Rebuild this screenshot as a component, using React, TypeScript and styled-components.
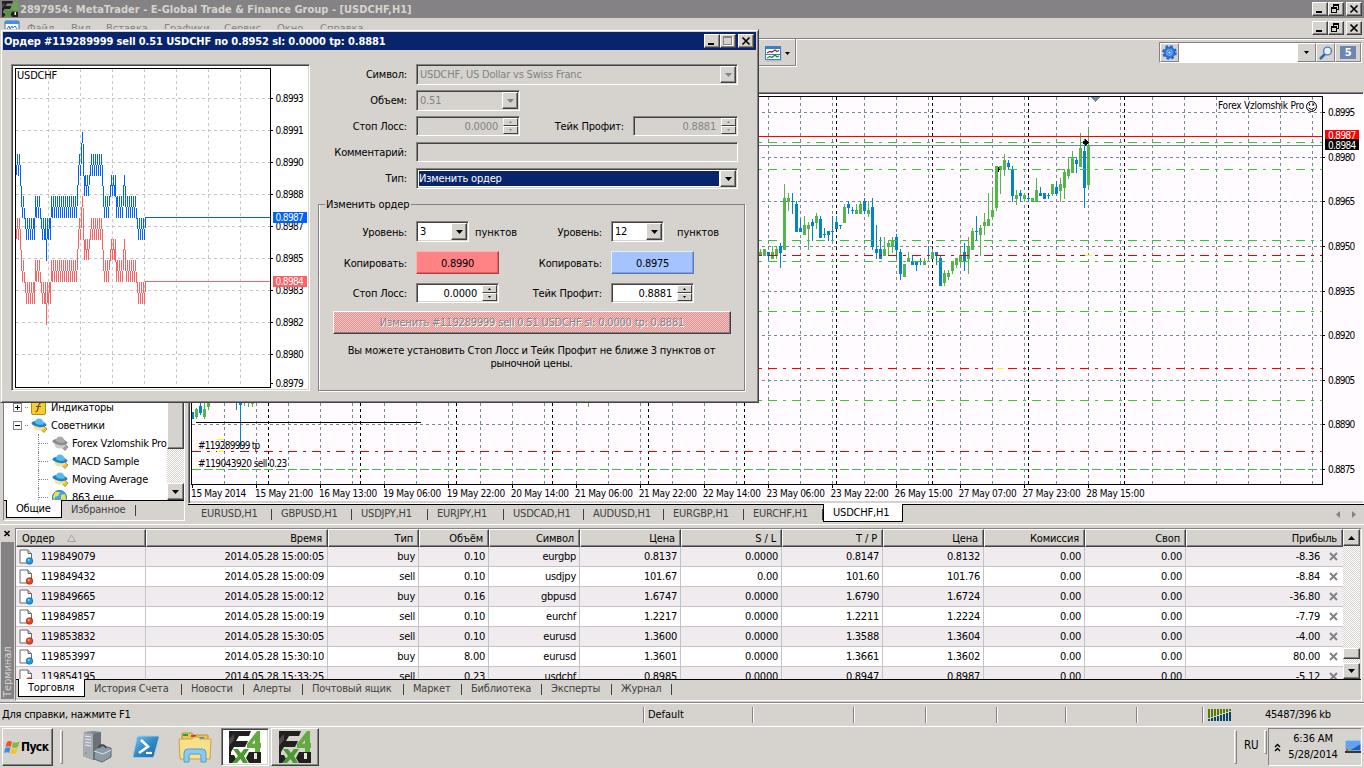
import React from "react";
import styled, { createGlobalStyle, css } from "styled-components";

const FACE = "#d6d3ce";
const SHADOW = "#848284";
const DARK = "#424142";
const NAVY = "#08246b";
const FONT = `"DejaVu Sans Condensed", "DejaVu Sans", sans-serif`;

const GlobalStyle = createGlobalStyle`
  * {
    box-sizing: border-box;
  }
  body {
    margin: 0;
    background: ${FACE};
    overflow: hidden;
  }
`;

const raised = css`
  background-color: ${FACE};
  border: 1px solid;
  border-color: #fff ${DARK} ${DARK} #fff;
  box-shadow: inset -1px -1px 0 ${SHADOW};
`;

const sunken = css`
  border: 1px solid;
  border-color: ${SHADOW} #fff #fff ${SHADOW};
  box-shadow: inset 1px 1px 0 ${DARK}, inset -1px -1px 0 ${FACE};
`;

const dither = css`
  background: repeating-conic-gradient(#fff 0 25%, ${FACE} 0 50%) 0 0 / 2px 2px;
`;

/* ---------- data ---------- */

// [up, high, top, bottom, low], one candle every 4px, three units to a pixel
type Candle = [0 | 1, number, number, number, number];

const candles: Candle[] = [
  [1, 357, 366, 378, 378],
  [1, 357, 357, 378, 378],
  [0, 366, 366, 378, 395],
  [1, 348, 366, 387, 387],
  [1, 348, 357, 378, 387],
  [0, 339, 348, 369, 414],
  [1, 162, 204, 360, 360],
  [1, 189, 204, 216, 243],
  [0, 189, 213, 216, 252],
  [0, 213, 222, 306, 306],
  [0, 267, 294, 306, 306],
  [1, 258, 285, 315, 315],
  [1, 276, 285, 297, 360],
  [0, 267, 276, 288, 333],
  [1, 249, 258, 279, 297],
  [0, 258, 267, 324, 324],
  [0, 294, 312, 315, 324],
  [0, 303, 303, 315, 333],
  [0, 258, 303, 306, 333],
  [0, 258, 276, 297, 297],
  [0, 285, 285, 288, 297],
  [1, 222, 231, 279, 279],
  [0, 213, 222, 234, 252],
  [0, 231, 240, 243, 252],
  [1, 222, 240, 252, 252],
  [1, 213, 222, 252, 252],
  [0, 204, 213, 243, 252],
  [1, 213, 240, 252, 261],
  [0, 204, 231, 351, 360],
  [0, 285, 357, 369, 387],
  [0, 321, 357, 387, 387],
  [1, 321, 357, 378, 378],
  [1, 333, 339, 351, 378],
  [1, 321, 330, 351, 369],
  [0, 312, 321, 360, 387],
  [0, 357, 366, 432, 450],
  [1, 402, 402, 441, 441],
  [1, 366, 384, 396, 396],
  [0, 375, 393, 405, 405],
  [0, 393, 393, 405, 423],
  [0, 384, 393, 396, 405],
  [1, 384, 393, 405, 405],
  [0, 348, 375, 378, 387],
  [1, 357, 366, 387, 387],
  [0, 366, 366, 378, 405],
  [0, 375, 384, 468, 468],
  [1, 420, 429, 459, 468],
  [1, 420, 429, 441, 450],
  [1, 393, 393, 423, 432],
  [1, 384, 384, 405, 414],
  [1, 357, 375, 396, 405],
  [0, 339, 366, 396, 423],
  [1, 321, 348, 387, 432],
  [1, 294, 303, 360, 360],
  [0, 258, 303, 306, 333],
  [1, 285, 294, 315, 378],
  [1, 249, 276, 288, 315],
  [1, 189, 267, 288, 288],
  [1, 171, 240, 261, 270],
  [1, 108, 108, 234, 243],
  [1, 108, 108, 120, 192],
  [1, 72, 90, 120, 138],
  [0, 90, 99, 111, 120],
  [0, 108, 117, 198, 216],
  [1, 180, 195, 207, 225],
  [0, 180, 189, 198, 216],
  [1, 189, 195, 207, 216],
  [0, 195, 204, 207, 216],
  [1, 204, 204, 216, 216],
  [1, 144, 180, 216, 216],
  [0, 171, 189, 198, 198],
  [0, 189, 189, 207, 207],
  [0, 189, 195, 198, 207],
  [1, 162, 162, 192, 198],
  [0, 153, 171, 192, 198],
  [1, 144, 162, 183, 216],
  [1, 117, 126, 174, 207],
  [1, 81, 117, 138, 147],
  [1, 63, 81, 129, 129],
  [0, 81, 90, 102, 129],
  [1, 9, 54, 111, 111],
  [0, 27, 63, 174, 234],
  [1, 0, 45, 165, 174],
];

const earlyCandles: Candle[] = [
  [0, 66, 66, 87, 87],
  [1, 54, 57, 81, 87],
  [0, 30, 48, 69, 75],
  [1, 30, 57, 81, 87],
  [1, 30, 30, 51, 60],
];

const prices = [
  ["0.8995", 112],
  ["0.8980", 157],
  ["0.8965", 201],
  ["0.8950", 246],
  ["0.8935", 291],
  ["0.8920", 335],
  ["0.8905", 380],
  ["0.8890", 424],
  ["0.8875", 469],
] as const;

const times = [
  "15 May 2014",
  "15 May 21:00",
  "16 May 13:00",
  "19 May 06:00",
  "19 May 22:00",
  "20 May 14:00",
  "21 May 06:00",
  "21 May 22:00",
  "22 May 14:00",
  "23 May 06:00",
  "23 May 22:00",
  "26 May 15:00",
  "27 May 07:00",
  "27 May 23:00",
  "28 May 15:00",
];

const daySeparators = [268, 360, 456, 552, 648, 744, 836, 932, 1028, 1124];

const orderLines = [
  ["#31cb31", 142],
  ["#31cb31", 169],
  ["#31cb31", 240],
  ["#31cb31", 261],
  ["#31cb31", 311],
  ["#31cb31", 400],
  ["#31cb31", 469],
  ["#e70000", 255],
  ["#ff0000", 368],
  ["#e70000", 451],
] as const;

const tickPrices = [
  ["0.8993", 98],
  ["0.8991", 130],
  ["0.8990", 162],
  ["0.8988", 194],
  ["0.8987", 226],
  ["0.8985", 258],
  ["0.8983", 290],
  ["0.8982", 322],
  ["0.8980", 354],
  ["0.8979", 383],
] as const;

// price levels of the tick chart and the runs that jump between two of them
const levels = [132, 154, 175.5, 196, 218, 240, 261];
const tickRuns: [number, number, number, number][] = [
  [16, 20, 1, 2],
  [21, 21, 3, 3],
  [22, 24, 3, 4],
  [25, 34, 4, 5],
  [35, 40, 3, 4],
  [41, 44, 4, 5],
  [45, 45, 4, 4],
  [46, 46, 6, 6],
  [47, 50, 4, 5],
  [51, 77, 3, 4],
  [78, 81, 1, 2],
  [82, 82, 0, 0],
  [83, 83, 1, 1],
  [84, 89, 2, 3],
  [90, 102, 1, 2],
  [103, 109, 3, 4],
  [110, 115, 2, 3],
  [116, 123, 3, 4],
  [124, 124, 2, 2],
  [125, 136, 3, 4],
  [137, 144, 4, 5],
  [145, 145, 4, 4],
];

const tickPoints = (dy: number) =>
  tickRuns
    .flatMap(([from, to, hi, lo]) =>
      Array.from({ length: to - from + 1 }, (_, i) => {
        const x = from + i;
        return `${x + 0.5},${levels[x % 2 ? hi : lo] + dy}`;
      })
    )
    .join(" ");

const columns = [
  "Ордер",
  "Время",
  "Тип",
  "Объём",
  "Символ",
  "Цена",
  "S / L",
  "T / P",
  "Цена",
  "Комиссия",
  "Своп",
  "Прибыль",
];

const orders = [
  ["119849079", "2014.05.28 15:00:05", "buy", "0.10", "eurgbp", "0.8137", "0.0000", "0.8147", "0.8132", "0.00", "0.00", "-8.36"],
  ["119849432", "2014.05.28 15:00:09", "sell", "0.10", "usdjpy", "101.67", "0.00", "101.60", "101.76", "0.00", "0.00", "-8.84"],
  ["119849665", "2014.05.28 15:00:12", "buy", "0.16", "gbpusd", "1.6747", "0.0000", "1.6790", "1.6724", "0.00", "0.00", "-36.80"],
  ["119849857", "2014.05.28 15:00:19", "sell", "0.10", "eurchf", "1.2217", "0.0000", "1.2211", "1.2224", "0.00", "0.00", "-7.79"],
  ["119853832", "2014.05.28 15:30:05", "sell", "0.10", "eurusd", "1.3600", "0.0000", "1.3588", "1.3604", "0.00", "0.00", "-4.00"],
  ["119853997", "2014.05.28 15:30:10", "buy", "8.00", "eurusd", "1.3601", "0.0000", "1.3661", "1.3602", "0.00", "0.00", "80.00"],
  ["119854195", "2014.05.28 15:33:25", "sell", "0.23", "usdchf", "0.8985", "0.0000", "0.8947", "0.8987", "0.00", "0.00", "-5.12"],
];

/* ---------- icons ---------- */

function ForexLogo({ size }: { size: number }) {
  return (
    <svg width={size} height={size} viewBox="0 0 32 32">
      <path d="M0 0H22L20 5H10L7 10H19L16 16H5L2 21V24H5L7 28L5 32H0Z" fill="#21201f" />
      <path d="M0 8L5 3V9L0 15Z" fill="#4a494a" />
      <path d="M20 21H32V32H20L17 27Z" fill="#21201f" />
      <rect x="25" y="22" width="3" height="6" fill="#e7e7de" />
      <path d="M28 0H31V12H32V17H31V21H26V17H18V13ZM26 9L23 12.500H26Z" fill="#63aa42" fillRule="evenodd" />
      <path d="M4 18H9L12 22L15 18H20L15 25L19 32H14L11.500 28L8 32H3L9 25Z" fill="#4a9a31" />
    </svg>
  );
}

const MdiIcon = () => (
  <svg width="16" height="16" viewBox="0 0 16 16">
    <rect x="1" y="1" width="14" height="12" rx="1" fill="#fff" stroke="#3175ce" />
    <rect x="1" y="1" width="14" height="3" fill="#4a8ae7" />
    <path d="M3 9l2-3 1 3 2-3 1 2 2-2 2 3" fill="none" stroke="#3175ce" />
  </svg>
);

const MinGlyph = () => (
  <svg width="14" height="12" viewBox="0 0 14 12" shapeRendering="crispEdges">
    <rect x="3" y="8" width="6" height="2" />
  </svg>
);

const MaxGlyph = () => (
  <svg width="14" height="12" viewBox="0 0 14 12" shapeRendering="crispEdges">
    <path d="M2 1h9v9h-9zM3 3v6h7V3z" fill="#848284" fillRule="evenodd" />
    <path d="M11 2h1v9H3v-1h8z" fill="#fff" />
  </svg>
);

const RestoreGlyph = () => (
  <svg width="14" height="12" viewBox="0 0 14 12" shapeRendering="crispEdges">
    <path d="M4 1h6v6h-2V6h1V3H5v1H4z" />
    <path d="M2 4h6v6H2zM3 6v3h4V6z" fillRule="evenodd" />
  </svg>
);

const CloseGlyph = () => (
  <svg width="14" height="12" viewBox="0 0 14 12">
    <path d="M3.500 2.500l7 7M10.500 2.500l-7 7" stroke="#000" strokeWidth="1.700" />
  </svg>
);

function Caret({ up, color = "#000", size = 7 }: { up?: boolean; color?: string; size?: number }) {
  const half = (size + 1) / 2;
  return (
    <svg width={size} height={half} viewBox={`0 0 ${size} ${half}`}>
      <path d={up ? `M0 ${half}H${size}L${size / 2} 0Z` : `M0 0H${size}L${size / 2} ${half}Z`} fill={color} />
    </svg>
  );
}

const TemplateIcon = () => (
  <svg width="17" height="16" viewBox="0 0 17 16">
    <rect x="1.5" y="1.5" width="15" height="14" fill="#a5a29c" opacity=".5" />
    <rect x=".5" y=".5" width="15" height="13" fill="#fff" stroke="#3182ce" />
    <rect x="0" y="0" width="16" height="3" fill="#3182ce" />
    <path d="M1 8.5h14" stroke="#3182ce" />
    <path d="M2 7l3-1.5 2 .5 3-2 2 1.500 2-1" fill="none" stroke="#a52810" strokeWidth="1.3" />
    <path d="M2 12l3-1.500 2 1 3-2.500 2 2 2-1" fill="none" stroke="#218a31" strokeWidth="1.300" />
  </svg>
);

const GearIcon = () => (
  <svg width="15" height="15" viewBox="0 0 16 16">
    <circle cx="8" cy="8" r="5.800" fill="#3179de" stroke="#1859bd" />
    <circle cx="8" cy="8" r="6.600" fill="none" stroke="#2169ce" strokeWidth="2.400" strokeDasharray="2.900 2.280" />
    <circle cx="8" cy="8" r="3.400" fill="#73b2f7" />
    <circle cx="8" cy="8" r="1.700" fill="#dee7f7" stroke="#1859bd" />
  </svg>
);

const SearchIcon = () => (
  <svg width="14" height="14" viewBox="0 0 14 14">
    <path d="M1 13l5-5" stroke="#3165ad" strokeWidth="2.500" />
    <circle cx="8.500" cy="5" r="3.900" fill="#e7f3ff" stroke="#4a7dc6" strokeWidth="1.400" />
  </svg>
);

function ExpertIcon({ gray }: { gray?: boolean }) {
  return (
    <svg width="17" height="15" viewBox="0 0 17 15">
      <path d="M12 7.500l4 3.500-3 3.500-3.500-3.500z" fill={gray ? "#a5a2a5" : "#efc331"} stroke={gray ? "#848284" : "#ad8208"} strokeWidth=".8" />
      <ellipse cx="8" cy="8.500" rx="5.500" ry="4" fill={gray ? "#cecbce" : "#f7dfa5"} />
      <ellipse cx="8" cy="6" rx="7.600" ry="3" fill={gray ? "#8c8a8c" : "#2182bd"} transform="rotate(8 8 6)" />
      <path d="M4 5c0-6 8-6 9 1c-3 1.500-6 1-9-1z" fill={gray ? "#adaaad" : "#5abaef"} />
    </svg>
  );
}

const FunctionIcon = () => (
  <svg width="15" height="15" viewBox="0 0 15 15">
    <rect x=".5" y=".5" width="14" height="14" rx="1.500" fill="#f7cb31" stroke="#b58a10" />
    <path d="M10 3c-4-.5-1.500 9-5.500 9M5 6.500h5" stroke="#6b4900" fill="none" strokeWidth="1.200" />
  </svg>
);

const GlobeIcon = () => (
  <svg width="15" height="15" viewBox="0 0 15 15">
    <circle cx="7.500" cy="7.500" r="7" fill="#42a6e7" stroke="#2175b5" />
    <path d="M3 2l5 0-2 4-3 1-1 4-1-4zM9 5l4-1 1 5-3 4-2-4z" fill="#efdf4a" />
  </svg>
);

function OrderIcon({ buy }: { buy: boolean }) {
  return (
    <svg width="15" height="16" viewBox="0 0 15 16">
      <path d="M1 1h8l3.500 3.500V14h-11.500z" fill="#fff" stroke="#6b696b" />
      <path d="M9 1v3.500H12.500" fill="#cecbce" stroke="#6b696b" />
      <circle cx="10.500" cy="12" r="3.300" fill={buy ? "#219ade" : "#e74921"} stroke={buy ? "#0865a5" : "#9c2008"} strokeWidth=".7" />
      <circle cx="9.700" cy="11" r="1" fill="#fff" opacity=".6" />
    </svg>
  );
}

const WindowsFlag = () => (
  <svg width="16" height="15" viewBox="0 0 16 15">
    <path d="M3 2c2-1.500 3-1 5-.3L6.800 7C5 6 3.500 6 1.500 7z" fill="#f0502a" />
    <path d="M9 2c2 1 4 1 6.500-.4L14 7c-2 1.300-4 1.200-6.200.3z" fill="#7bbf3f" />
    <path d="M1.300 8c2-1 3.500-1 5.200-.2L5.200 13C3.500 12 2 12 0 13z" fill="#3c8de0" />
    <path d="M7.500 8.300c2 1 4 1 6.300-.2L12.500 13c-2 1.500-4 1.200-6.300.3z" fill="#f9c22e" />
  </svg>
);

const ServerIcon = () => (
  <svg width="30" height="32" viewBox="0 0 30 32">
    <path d="M2 1l10-1 7 1v24l-8 4-10-4z" fill="#848a94" />
    <path d="M2 1l9 2v26L1 25z" fill="#a5aab5" />
    <path d="M11 3l8-2v24l-8 4z" fill="#6b717b" />
    <path d="M3 5l6 1M3 8l6 1M3 11l6 1M3 14l6 1" stroke="#e7ebef" strokeWidth="1.200" />
    <circle cx="4" cy="22" r="1" fill="#52c331" />
    <path d="M13 18l8-3 8 2v9l-9 5-8-3z" fill="#8c9aa5" stroke="#5a6973" />
    <path d="M12 20l9 3 8-4" fill="none" stroke="#dee3e7" />
    <path d="M17 17c0-4 6-4 7 0" fill="none" stroke="#39414a" strokeWidth="1.500" />
  </svg>
);

const PowerShellIcon = () => (
  <svg width="28" height="24" viewBox="0 0 28 24">
    <defs>
      <linearGradient id="ps" x1="0" y1="0" x2="1" y2="1">
        <stop offset="0" stopColor="#7bc3ef" />
        <stop offset=".5" stopColor="#318ac6" />
        <stop offset="1" stopColor="#1865a5" />
      </linearGradient>
    </defs>
    <path d="M7 1h19q1.500 0 1 1.500L22 21q-.5 1.500-2 1.500H2q-1.500 0-1-1.500L5 2.500q.5-1.500 2-1.500z" fill="url(#ps)" stroke="#9ccbe7" />
    <path d="M9 5l7 6.500L7 18" fill="none" stroke="#fff" strokeWidth="2.600" />
    <path d="M14 18h6" stroke="#fff" strokeWidth="2.200" />
  </svg>
);

const FolderIcon = () => (
  <svg width="34" height="32" viewBox="0 0 34 32">
    <path d="M4 2h10l2 2h14v20H4z" fill="#e7c35a" stroke="#bd9231" />
    <rect x="5" y="3" width="5" height="2" fill="#21a631" />
    <rect x="13" y="4" width="5" height="2" fill="#de3921" />
    <rect x="21" y="6" width="5" height="2" fill="#3992de" />
    <path d="M1 8h13l2-2h5l1 2h11l-1 20H2z" fill="#f7df8c" stroke="#cea242" />
    <path d="M6 31v-9q0-4 4-4h14q4 0 4 4v9h-5v-6q0-2-2-2h-8q-2 0-2 2v6z" fill="#8ccbef" stroke="#529ece" />
  </svg>
);

const MonitorIcon = () => (
  <svg width="16" height="14" viewBox="0 0 16 14">
    <rect x="0" y="0" width="16" height="11" fill="#215dbd" />
    <path d="M0 0h16v4L4 11H0z" fill="#63a2ef" />
    <rect x="0" y="0" width="16" height="11" fill="none" stroke="#dee7ef" />
    <rect x="0" y="11" width="16" height="2" fill="#31393a" />
    <rect x="1" y="9" width="2" height="2" fill="#ef4921" />
    <rect x="3" y="9" width="2" height="2" fill="#7bc339" />
  </svg>
);

/* ---------- frame ---------- */

const Desktop = styled.div`
  position: relative;
  width: 1364px;
  height: 768px;
  display: flex;
  flex-direction: column;
  overflow: hidden;
  background: ${FACE};
  font: 11px/13px ${FONT};
  letter-spacing: -0.3px;
  color: #000;
  white-space: nowrap;
  cursor: default;

  svg {
    display: block;
    flex: none;
  }
`;

const AppTitle = styled.div`
  height: 18px;
  flex: none;
  display: flex;
  align-items: center;
  gap: 2px;
  padding: 0 2px;
  background: ${SHADOW};
  color: ${FACE};
`;

const BoldText = styled.b<{ $spacing: number }>`
  flex: 1;
  letter-spacing: ${({ $spacing }) => $spacing}px;
`;

const WinButtons = styled.div`
  display: flex;
  margin-left: auto;
  padding-bottom: 1px;
`;

const WinButton = styled.div<{ $close?: boolean }>`
  ${raised}
  width: 16px;
  height: 14px;
  margin-left: ${({ $close }) => ($close ? 2 : 0)}px;
`;

const MenuBar = styled.div`
  height: 20px;
  flex: none;
  display: flex;
  align-items: center;
  padding: 0 2px 0 4px;
  color: ${SHADOW};
`;

const MenuItem = styled.span<{ $width: number }>`
  width: ${({ $width }) => $width}px;
  letter-spacing: 0;
`;

const ToolbarArea = styled.div`
  height: 54px;
  flex: none;
  display: flex;
  align-items: flex-start;
  justify-content: space-between;
  border-top: 1px solid ${SHADOW};
  box-shadow: inset 0 1px 0 #fff;
`;

const ToolGroup = styled.div`
  width: 797px;
  height: 28px;
  display: flex;
  align-items: center;
  justify-content: flex-end;
  gap: 3px;
  padding: 2px 6px 0 0;
  border: solid #fff;
  border-width: 0 1px 1px 0;
  box-shadow: inset -1px -1px 0 ${SHADOW};
`;

const SearchBox = styled.div`
  display: flex;
  height: 21px;
  margin: 3px 2px 0 0;
  border: 1px solid;
  border-color: ${SHADOW} #fff #fff ${SHADOW};
`;

const SearchPart = styled.div<{ $width: number; $input?: boolean }>`
  width: ${({ $width }) => $width}px;
  display: flex;
  align-items: center;
  justify-content: center;
  background: ${({ $input }) => ($input ? "#fff" : FACE)};
  border: ${({ $input }) => ($input ? "none" : `1px solid ${SHADOW}`)};
  border-color: #fff ${SHADOW} ${SHADOW} #fff;
`;

const Bubble = styled.div`
  width: 16px;
  height: 13px;
  background: #6b86b5;
  color: #fff;
  font-weight: bold;
  text-align: center;
`;

const Workspace = styled.div`
  height: 432px;
  flex: none;
  display: flex;
`;

/* ---------- navigator ---------- */

const Navigator = styled.div`
  width: 187px;
  display: flex;
  flex-direction: column;
  justify-content: flex-end;
  padding: 0 2px 0 3px;
`;

const NavFrame = styled.div`
  height: 150px;
  margin-bottom: 3px;
  display: flex;
  flex-direction: column;
  border: 1px solid;
  border-color: ${SHADOW} #fff #fff ${SHADOW};
`;

const TreeArea = styled.div`
  flex: 1;
  min-height: 0;
  display: flex;
  background: #fff;
  overflow: hidden;
`;

const Tree = styled.div`
  width: 163px;
  margin-top: 26px;
`;

const TreeRow = styled.div<{ $level: number }>`
  height: 18px;
  display: flex;
  align-items: center;
  gap: 3px;
  padding-left: ${({ $level }) => ($level ? 34 : 9)}px;
  overflow: hidden;
  letter-spacing: -0.25px;
`;

const Expander = styled.span`
  width: 9px;
  height: 9px;
  border: 1px solid ${SHADOW};
  display: grid;
  place-items: center;
`;

const DotLink = styled.span<{ $child?: boolean }>`
  width: ${({ $child }) => ($child ? 11 : 3)}px;
  height: ${({ $child }) => ($child ? 18 : 1)}px;
  border-left: ${({ $child }) => ($child ? `1px dotted ${SHADOW}` : "none")};
  background: linear-gradient(90deg, ${SHADOW} 50%, transparent 0) 0 50% / 2px 1px repeat-x;
`;

const TreeText = styled.span<{ $left: number }>`
  padding-left: ${({ $left }) => $left}px;
`;

const ScrollBar = styled.div`
  ${dither}
  width: 17px;
  display: flex;
  flex-direction: column;
`;

const ScrollPart = styled.div<{ $height: number; $gap?: number }>`
  ${raised}
  height: ${({ $height }) => $height}px;
  margin-bottom: ${({ $gap = 0 }) => $gap}px;
  flex: none;
  display: grid;
  place-items: center;
`;

const Spring = styled.div`
  flex: 1;
`;

const TabStrip = styled.div<{ $height: number; $pad: number }>`
  height: ${({ $height }) => $height}px;
  flex: none;
  display: flex;
  align-items: flex-start;
  padding-left: ${({ $pad }) => $pad}px;
  border-top: 1px solid #000;
  color: ${DARK};
`;

const Tab = styled.div<{ $width: number; $active?: boolean }>`
  width: ${({ $width }) => $width}px;
  height: 18px;
  margin-top: -1px;
  display: flex;
  align-items: center;
  padding-left: 9px;
  letter-spacing: -0.2px;
  ${({ $active }) =>
    $active
      ? css`
          background: #fff;
          color: #000;
          border: 1px solid #000;
          border-top: none;
        `
      : css`
          background: linear-gradient(${DARK}, ${DARK}) right 5px / 1px 11px no-repeat;
        `}
`;

/* ---------- main chart ---------- */

const ChartColumn = styled.div`
  flex: 1;
  display: flex;
  flex-direction: column;
  border-left: 1px solid ${FACE};
`;

const ChartFrame = styled.div`
  height: 412px;
  flex: none;
  border: 1px solid;
  border-color: ${SHADOW} #fff #fff ${SHADOW};
  box-shadow: inset 1px 1px 0 ${DARK}, inset 0 -2px 0 ${FACE};
  padding: 1px 0 0 1px;
  background: #fffbff;
  overflow: hidden;
`;

const TabArrows = styled.div`
  margin: 6px 8px 0 auto;
  display: flex;
  gap: 12px;
`;

const chartText = { fontFamily: FONT, fontSize: 10 } as const;

function CandleShape({ x, base, data }: { x: number; base: number; data: Candle }) {
  const [up, high, top, bottom, low] = data;
  const y = (v: number) => base + Math.round(v / 3);
  return (
    <g fill={up ? "#52b64a" : "#0086c6"}>
      <rect x={x} y={y(high)} width="1" height={Math.max(1, y(low) - y(high))} />
      <rect x={x - 1} y={y(top)} width="3" height={Math.max(1, y(bottom) - y(top))} />
    </g>
  );
}

function MainChart() {
  return (
    <svg width="1172" height="408" viewBox="190 94 1172 408" shapeRendering="crispEdges">
      <g stroke="#738a9c" strokeDasharray="3 3">
        {Array.from({ length: 35 }, (_, i) => 224 + i * 32).map((x) => (
          <path key={x} d={`M${x + 0.5} 97V484`} />
        ))}
        {prices.map(([label, y]) => (
          <path key={label} d={`M192 ${y + 0.5}H1322`} />
        ))}
      </g>
      {daySeparators.map((x) => (
        <path key={x} d={`M${x + 0.5} 97V484`} stroke="#000" strokeDasharray="3 3" />
      ))}
      {candles.map((c, i) => (
        <CandleShape key={i} x={760 + i * 4} base={130} data={c} />
      ))}
      {earlyCandles.map((c, i) => (
        <CandleShape key={i} x={192 + i * 4} base={390} data={c} />
      ))}
      <g fill="#0086c6">
        <rect x="236" y="400" width="1" height="10" />
        <rect x="239" y="400" width="3" height="5" />
        <rect x="240" y="400" width="1" height="49" />
      </g>
      <g fill="#52b64a">
        <rect x="244" y="400" width="1" height="6" />
        <rect x="248" y="400" width="1" height="7" />
        <rect x="251" y="400" width="3" height="4" />
        <rect x="252" y="400" width="1" height="7" />
        <rect x="588" y="400" width="1" height="7" />
      </g>
      {orderLines.map(([color, y]) => (
        <path key={y} d={`M192 ${y + 0.5}H1322`} stroke={color} strokeDasharray="9 6 3 6" />
      ))}
      <path d="M217 439.500h7M217 451.500h7M997 368.500h7M1085 255.500h7" stroke="#ff0" />
      <path d="M192 136.500H1322" stroke="#f00" />
      <path d="M192 145.500H1322" stroke="#738a9c" />
      <path d="M196 422.500H421" stroke="#000" />
      <path d="M1083 141h2v-2h1v1h1v1h1v1h1v1h-1v1h-1v1h-1v1h-1v-2h-2z" />
      <path d="M998 167h1v2h1v1h-1v2h-1z" />
      <path d="M1090 97h10l-5 5z" fill="#738a9c" />
      <path d="M191.500 485V96.500H1322.500V484.500H191" fill="none" stroke="#000" />
      {prices.map(([label, y]) => (
        <g key={label}>
          <rect x="1322" y={y} width="3" height="1" />
          <text x="1328" y={y + 4} textLength="27" {...chartText}>
            {label}
          </text>
        </g>
      ))}
      <rect x="1325" y="130" width="34" height="10" fill="#f00" />
      <rect x="1325" y="139" width="34" height="11" />
      <text x="1328" y="139" textLength="28" fill="#fff" {...chartText}>
        0.8987
      </text>
      <text x="1328" y="148.500" textLength="28" fill="#fff" {...chartText}>
        0.8984
      </text>
      {times.map((label, i) => (
        <g key={label}>
          <rect x={192 + i * 64} y="485" width="1" height="3" />
          <text x={i ? 255 + (i - 1) * 63.95 : 191} y="497" textLength={i ? 58 : 55} {...chartText}>
            {label}
          </text>
        </g>
      ))}
      <text x="198" y="449" textLength="62" {...chartText}>
        #119289999 tp
      </text>
      <text x="198" y="467" textLength="89" {...chartText}>
        #119043920 sell 0.23
      </text>
      <text x="1218" y="109" textLength="86" {...chartText}>
        Forex Vzlomshik Pro
      </text>
      <g fill="none" stroke="#000" shapeRendering="auto">
        <circle cx="1311.500" cy="106.500" r="5" />
        <path d="M1308.500 108q3 3 6 0" />
        <path d="M1309.500 103.500v2M1313.500 103.500v2" strokeWidth="1.300" />
      </g>
    </svg>
  );
}

/* ---------- terminal ---------- */

const Terminal = styled.div`
  height: 177px;
  flex: none;
  display: flex;
  border-top: 1px solid #fff;
`;

const TerminalSide = styled.div`
  width: 15px;
  padding: 5px 1px 0;
`;

const TerminalBar = styled.div`
  width: 13px;
  height: 157px;
  margin-top: 5px;
  background: ${SHADOW};
  color: ${FACE};
  writing-mode: vertical-rl;
  transform: rotate(180deg);
  text-align: left;
  padding-top: 2px;
  letter-spacing: -0.1px;
  line-height: 13px;
`;

const TerminalFrame = styled.div`
  flex: 1;
  margin: 3px 2px 0 0;
  border: 1px solid;
  border-color: ${SHADOW} #fff #fff ${SHADOW};
`;

const TableArea = styled.div`
  height: 150px;
  display: flex;
  overflow: hidden;
`;

const Table = styled.div`
  width: 1327px;
`;

const TableRow = styled.div<{ $alt?: boolean }>`
  display: grid;
  grid-template-columns: 130px 182px 91px 70px 91px repeat(6, 101px) 157px;
  height: 20px;
  background: ${({ $alt }) => ($alt ? "#efebef" : "#fff")};
`;

const HeadCell = styled.div`
  ${raised}
  height: 18px;
  padding: 2px 5px 0 5px;
  display: flex;
  gap: 12px;
  justify-content: flex-end;
  letter-spacing: -0.15px;

  &:first-child {
    justify-content: flex-start;
  }
`;

const HeadRow = styled(TableRow)`
  height: 18px;
`;

const Cell = styled.div`
  display: flex;
  align-items: center;
  justify-content: flex-end;
  padding-right: 3px;
  letter-spacing: -0.25px;
  border: solid #c6c3c6;
  border-width: 0 1px 1px 0;

  &:first-child {
    justify-content: flex-start;
    gap: 7px;
    padding-left: 3px;
  }
  &:last-child {
    padding-right: 5px;
    gap: 9px;
    border-right: none;
  }
`;

/* ---------- status bar and taskbar ---------- */

const StatusBar = styled.div`
  height: 25px;
  margin-top: 1px;
  flex: none;
  display: flex;
  align-items: center;
  border: solid;
  border-width: 1px 0;
  border-color: ${SHADOW} transparent #fff;
  box-shadow: inset 0 1px 0 #fff;
`;

const StatusCell = styled.div<{ $width: number }>`
  width: ${({ $width }) => $width}px;
  height: 16px;
  display: flex;
  align-items: center;
  padding-left: 2px;
  border-right: 1px solid ${SHADOW};
  box-shadow: 1px 0 0 #fff;

  &:last-child {
    border: none;
    box-shadow: none;
    gap: 33px;
    padding-left: 5px;
  }
`;

const StatusText = styled.span<{ $spacing: number; $left?: number }>`
  letter-spacing: ${({ $spacing }) => $spacing}px;
  padding-left: ${({ $left = 0 }) => $left}px;
`;

const Taskbar = styled.div`
  flex: 1;
  display: flex;
  align-items: flex-start;
  padding: 1px 2px 0;
`;

const StartButton = styled.div`
  ${raised}
  width: 51px;
  height: 38px;
  display: flex;
  align-items: center;
  gap: 1px;
  padding-left: 1px;
  font-size: 12px;
  font-weight: bold;
  letter-spacing: -0.6px;
`;

const Grip = styled.div<{ $left: number; $height: number }>`
  width: 3px;
  height: ${({ $height }) => $height}px;
  margin: 2px 0 0 ${({ $left }) => $left}px;
  border: 1px solid;
  border-color: #fff ${SHADOW} ${SHADOW} #fff;
`;

const QuickLaunch = styled.div<{ $left: number }>`
  height: 38px;
  display: flex;
  align-items: center;
  margin-left: ${({ $left }) => $left}px;
`;

const TaskButton = styled.div<{ $active?: boolean }>`
  ${({ $active }) => ($active ? sunken : raised)}
  width: 48px;
  height: 38px;
  margin-right: 2px;
  display: grid;
  place-items: center;
  background-color: ${({ $active }) => ($active ? "#fff" : FACE)};
`;

const TrayText = styled.div`
  align-self: center;
  margin: 0 4px 5px 7px;
  width: 18px;
  font-size: 11.5px;
`;

const Tray = styled.div`
  width: 94px;
  height: 38px;
  margin-left: 1px;
  display: flex;
  align-items: center;
  gap: 5px;
  padding-left: 5px;
  border: 1px solid;
  border-color: ${SHADOW} #fff #fff ${SHADOW};
`;

const Clock = styled.div`
  width: 54px;
  text-align: center;
  line-height: 16px;
  letter-spacing: -0.15px;
`;

/* ---------- order dialog ---------- */

const Dialog = styled.div`
  position: absolute;
  left: 0;
  top: 29px;
  width: 759px;
  height: 374px;
  padding: 1px;
  background: ${FACE};
  border: 1px solid;
  border-color: ${FACE} ${DARK} ${DARK} ${FACE};
  box-shadow: inset 1px 1px 0 #fff, inset -1px -1px 0 ${SHADOW};
`;

const DialogTitle = styled.div`
  height: 18px;
  margin: 1px 1px 0;
  padding: 0 2px 0 1px;
  display: flex;
  align-items: center;
  background: ${NAVY};
  color: #fff;
`;

const DialogBody = styled.div`
  display: flex;
  gap: 8px;
  padding: 14px 0 0 9px;
`;

const TickFrame = styled.div`
  ${sunken}
  width: 299px;
  height: 327px;
  padding: 1px;
  background: #fff;
`;

const Form = styled.div`
  width: 428px;
`;

const FormRow = styled.div`
  height: 26px;
  display: flex;
`;

const Label = styled.div<{ $width: number }>`
  flex: none;
  width: ${({ $width }) => $width}px;
  padding-top: 4px;
  margin-right: 9px;
  text-align: right;
  letter-spacing: -0.18px;
`;

const Field = styled.div<{ $width: number; $height?: number; $disabled?: boolean }>`
  ${sunken}
  flex: none;
  width: ${({ $width }) => $width}px;
  height: ${({ $height = 21 }) => $height}px;
  padding: 1px;
  display: flex;
  background: ${({ $disabled }) => ($disabled ? FACE : "#fff")};
  color: ${({ $disabled }) => ($disabled ? SHADOW : "#000")};
`;

const FieldText = styled.div<{ $right?: boolean; $selected?: boolean }>`
  flex: 1;
  margin: 1px;
  padding: ${({ $right }) => ($right ? "1px 4px 0 0" : "1px 0 0 1px")};
  text-align: ${({ $right }) => ($right ? "right" : "left")};
  letter-spacing: -0.2px;
  ${({ $selected }) =>
    $selected &&
    css`
      background: ${NAVY};
      color: #fff;
      padding-left: 0;
    `}
`;

const DropButton = styled.div`
  ${raised}
  width: 16px;
  display: grid;
  place-items: center;
`;

const SpinButtons = styled.div`
  width: 15px;
  display: grid;
  grid-template-rows: 1fr 1fr;
`;

const SpinButton = styled.div`
  ${raised}
  box-shadow: none;
  display: grid;
  place-items: center;
`;

const GroupBox = styled.fieldset`
  width: 427px;
  height: 193px;
  margin: 4px 0 0;
  padding: 0 14px;
  border: 1px solid ${SHADOW};
  box-shadow: 1px 1px 0 #fff, inset 1px 0 0 #fff;
  min-width: 0;

  legend {
    margin-left: -8px;
    padding: 0 2px 0 1px;
    letter-spacing: -0.15px;
  }
`;

const GroupRow = styled.div<{ $height: number; $textTop: number }>`
  display: flex;
  height: ${({ $height }) => $height}px;

  legend + & {
    margin-top: 10px;
  }
  ${Label} {
    padding-top: ${({ $textTop }) => $textTop}px;
  }
`;

const Unit = styled.div<{ $left: number; $width: number }>`
  flex: none;
  width: ${({ $width }) => $width}px;
  padding: 5px 0 0 ${({ $left }) => $left}px;
  letter-spacing: -0.05px;
`;

const CopyButton = styled.div<{ $tone: "red" | "blue" }>`
  flex: none;
  width: 83px;
  height: 23px;
  padding-top: 1px;
  display: grid;
  place-items: center;
  background: ${({ $tone }) => ($tone === "red" ? "#ff8284" : "#a5c3ff")};
  border: 1px solid;
  border-color: ${({ $tone }) =>
    $tone === "red" ? "#ffb2b5 #b53c42 #b53c42 #ffb2b5" : "#d6f3ff #527dbd #527dbd #d6f3ff"};
  box-shadow: inset -1px -1px 0 ${({ $tone }) => ($tone === "red" ? "#de6163" : "#849ed6")};
`;

const ModifyButton = styled.div`
  ${raised}
  width: 398px;
  height: 23px;
  margin-top: 8px;
  display: grid;
  place-items: center;
  background: repeating-conic-gradient(#ff8284 0 25%, ${FACE} 0 50%) 0 0 / 2px 2px;
  color: ${SHADOW};
  text-shadow: 1px 1px 0 #fff;
  letter-spacing: -0.18px;
`;

const Hint = styled.div`
  margin-top: 10px;
  text-align: center;
  letter-spacing: -0.19px;
`;

interface IComboProps {
  value: string;
  width: number;
  disabled?: boolean;
  selected?: boolean;
}

function Combo({ value, width, disabled, selected }: IComboProps) {
  return (
    <Field $width={width} $disabled={disabled}>
      <FieldText $selected={selected}>{value}</FieldText>
      <DropButton>
        <Caret color={disabled ? SHADOW : "#000"} />
      </DropButton>
    </Field>
  );
}

function Spin({ value, width, disabled }: IComboProps) {
  const color = disabled ? SHADOW : "#000";
  return (
    <Field $width={width} $height={20} $disabled={disabled}>
      <FieldText $right>{value}</FieldText>
      <SpinButtons>
        <SpinButton>
          <Caret up size={3} color={color} />
        </SpinButton>
        <SpinButton>
          <Caret size={3} color={color} />
        </SpinButton>
      </SpinButtons>
    </Field>
  );
}

function TickChart() {
  return (
    <svg width="295" height="323" viewBox="13 66 295 323" shapeRendering="crispEdges">
      <g stroke="#c6c7c6" strokeDasharray="3 3">
        {[48, 80, 112, 144, 176, 208, 240].map((x) => (
          <path key={x} d={`M${x + 0.5} 69V387`} />
        ))}
        {tickPrices.slice(0, 9).map(([label, y]) => (
          <path key={label + y} d={`M16 ${y + 0.5}H270`} />
        ))}
      </g>
      <polyline points={tickPoints(64)} fill="none" stroke="#ff6163" />
      <rect x="145" y="281" width="125" height="1" fill="#ff6163" />
      <polyline points={tickPoints(0)} fill="none" stroke="#0061ff" />
      <rect x="145" y="217" width="125" height="1" fill="#0061ff" />
      <rect x="15.500" y="68.500" width="255" height="319" fill="none" stroke="#000" />
      <text x="17" y="79" textLength="40" fontFamily={FONT} fontSize="11">
        USDCHF
      </text>
      {tickPrices.map(([label, y]) => (
        <g key={label + y}>
          <rect x="271" y={y} width="2" height="1" />
          <text x="275.500" y={y + 4} textLength="28" {...chartText}>
            {label}
          </text>
        </g>
      ))}
      <rect x="273" y="212" width="34" height="11" fill="#0061ff" />
      <rect x="273" y="276" width="34" height="11" fill="#ff6163" />
      <text x="275.500" y="221" textLength="28" fill="#fff" {...chartText}>
        0.8987
      </text>
      <text x="275.500" y="285" textLength="28" fill="#fff" {...chartText}>
        0.8984
      </text>
    </svg>
  );
}

function OrderDialog() {
  return (
    <Dialog>
      <DialogTitle>
        <BoldText $spacing={-0.11}>Ордер #119289999 sell 0.51 USDCHF по 0.8952 sl: 0.0000 tp: 0.8881</BoldText>
        <WinButtons>
          <WinButton>
            <MinGlyph />
          </WinButton>
          <WinButton>
            <MaxGlyph />
          </WinButton>
          <WinButton $close>
            <CloseGlyph />
          </WinButton>
        </WinButtons>
      </DialogTitle>
      <DialogBody>
        <TickFrame>
          <TickChart />
        </TickFrame>
        <Form>
          <FormRow>
            <Label $width={89}>Символ:</Label>
            <Combo value="USDCHF, US Dollar vs Swiss Franc" width={322} disabled />
          </FormRow>
          <FormRow>
            <Label $width={89}>Объем:</Label>
            <Combo value="0.51" width={104} disabled />
          </FormRow>
          <FormRow>
            <Label $width={89}>Стоп Лосс:</Label>
            <Spin value="0.0000" width={104} disabled />
            <Label $width={104}>Тейк Профит:</Label>
            <Spin value="0.8881" width={105} disabled />
          </FormRow>
          <FormRow>
            <Label $width={89}>Комментарий:</Label>
            <Field $width={322} $height={20} $disabled />
          </FormRow>
          <FormRow>
            <Label $width={89}>Тип:</Label>
            <Combo value="Изменить ордер" width={322} selected />
          </FormRow>
          <GroupBox>
            <legend>Изменить ордер</legend>
            <GroupRow $height={30} $textTop={5}>
              <Label $width={74}>Уровень:</Label>
              <Combo value="3" width={53} />
              <Unit $left={6} $width={70}>
                пунктов
              </Unit>
              <Label $width={63}>Уровень:</Label>
              <Combo value="12" width={53} />
              <Unit $left={13} $width={60}>
                пунктов
              </Unit>
            </GroupRow>
            <GroupRow $height={32} $textTop={6}>
              <Label $width={74}>Копировать:</Label>
              <CopyButton $tone="red">0.8990</CopyButton>
              <Label $width={103}>Копировать:</Label>
              <CopyButton $tone="blue">0.8975</CopyButton>
            </GroupRow>
            <GroupRow $height={20} $textTop={4}>
              <Label $width={74}>Стоп Лосс:</Label>
              <Spin value="0.0000" width={83} />
              <Label $width={103}>Тейк Профит:</Label>
              <Spin value="0.8881" width={83} />
            </GroupRow>
            <ModifyButton>Изменить #119289999 sell 0.51 USDCHF sl: 0.0000 tp: 0.8881</ModifyButton>
            <Hint>
              Вы можете установить Стоп Лосс и Тейк Профит не ближе 3 пунктов от
              <br />
              рыночной цены.
            </Hint>
          </GroupBox>
        </Form>
      </DialogBody>
    </Dialog>
  );
}

/* ---------- page ---------- */

function TopBars() {
  const buttons = (
    <WinButtons>
      <WinButton>
        <MinGlyph />
      </WinButton>
      <WinButton>
        <RestoreGlyph />
      </WinButton>
      <WinButton $close>
        <CloseGlyph />
      </WinButton>
    </WinButtons>
  );
  return (
    <>
      <AppTitle>
        <ForexLogo size={16} />
        <BoldText $spacing={0.02}>2897954: MetaTrader - E-Global Trade &amp; Finance Group - [USDCHF,H1]</BoldText>
        {buttons}
      </AppTitle>
      <MenuBar>
        <MenuItem $width={23}>
          <MdiIcon />
        </MenuItem>
        <MenuItem $width={44}>Файл</MenuItem>
        <MenuItem $width={35}>Вид</MenuItem>
        <MenuItem $width={58}>Вставка</MenuItem>
        <MenuItem $width={60}>Графики</MenuItem>
        <MenuItem $width={53}>Сервис</MenuItem>
        <MenuItem $width={43}>Окно</MenuItem>
        <MenuItem $width={60}>Справка</MenuItem>
        {buttons}
      </MenuBar>
      <ToolbarArea>
        <ToolGroup>
          <TemplateIcon />
          <Caret size={5} />
        </ToolGroup>
        <SearchBox>
          <SearchPart $width={19}>
            <GearIcon />
          </SearchPart>
          <SearchPart $width={118} $input />
          <SearchPart $width={19}>
            <Caret size={5} />
          </SearchPart>
          <SearchPart $width={19}>
            <SearchIcon />
          </SearchPart>
          <SearchPart $width={26}>
            <Bubble>5</Bubble>
          </SearchPart>
        </SearchBox>
      </ToolbarArea>
    </>
  );
}

function NavigatorPanel() {
  return (
    <Navigator>
      <NavFrame>
        <TreeArea>
          <Tree>
            <TreeRow $level={0}>
              <Expander>
                <svg width="5" height="5" shapeRendering="crispEdges">
                  <path d="M0 2h5v1H0zM2 0h1v5H2z" />
                </svg>
              </Expander>
              <DotLink />
              <FunctionIcon />
              <TreeText $left={2}>Индикаторы</TreeText>
            </TreeRow>
            <TreeRow $level={0}>
              <Expander>
                <svg width="5" height="5" shapeRendering="crispEdges">
                  <path d="M0 2h5v1H0z" />
                </svg>
              </Expander>
              <DotLink />
              <ExpertIcon />
              <TreeText $left={0}>Советники</TreeText>
            </TreeRow>
            {["Forex Vzlomshik Pro", "MACD Sample", "Moving Average"].map((name, i) => (
              <TreeRow key={name} $level={1}>
                <DotLink $child />
                <ExpertIcon gray={i === 0} />
                <TreeText $left={0}>{name}</TreeText>
              </TreeRow>
            ))}
            <TreeRow $level={1}>
              <DotLink $child />
              <GlobeIcon />
              <TreeText $left={2}>863 еще...</TreeText>
            </TreeRow>
          </Tree>
          <ScrollBar>
            <ScrollPart $height={77} />
            <Spring />
            <ScrollPart $height={17}>
              <Caret />
            </ScrollPart>
          </ScrollBar>
        </TreeArea>
        <TabStrip $height={20} $pad={2}>
          <Tab $width={56} $active>
            Общие
          </Tab>
          <Tab $width={74}>Избранное</Tab>
        </TabStrip>
      </NavFrame>
    </Navigator>
  );
}

const chartTabs = [
  ["EURUSD,H1", 80],
  ["GBPUSD,H1", 80],
  ["USDJPY,H1", 76],
  ["EURJPY,H1", 76],
  ["USDCAD,H1", 80],
  ["AUDUSD,H1", 80],
  ["EURGBP,H1", 80],
  ["EURCHF,H1", 79],
] as const;

const terminalTabs = [
  ["История Счета", 97],
  ["Новости", 62],
  ["Алерты", 59],
  ["Почтовый ящик", 101],
  ["Маркет", 58],
  ["Библиотека", 80],
  ["Эксперты", 70],
  ["Журнал", 60],
] as const;

function TerminalPanel() {
  return (
    <Terminal>
      <TerminalSide>
        <svg width="12" height="7" viewBox="0 0 12 7">
          <path d="M3.500 1l5 5M8.500 1l-5 5" stroke="#000" strokeWidth="1.600" />
        </svg>
        <TerminalBar>Терминал</TerminalBar>
      </TerminalSide>
      <TerminalFrame>
        <TableArea>
          <Table>
            <HeadRow>
              {columns.map((name, i) => (
                <HeadCell key={i}>
                  {name}
                  {i === 0 && (
                    <svg width="9" height="11" viewBox="0 0 9 11">
                      <path d="M.5 9.500L4.500 3L8.500 9.500Z" fill="none" stroke="#a5a2a5" />
                    </svg>
                  )}
                </HeadCell>
              ))}
            </HeadRow>
            {orders.map((row, i) => (
              <TableRow key={row[0]} $alt={i % 2 === 0}>
                {row.map((value, j) => (
                  <Cell key={j}>
                    {j === 0 && <OrderIcon buy={row[2] === "buy"} />}
                    {value}
                    {j === 11 && (
                      <svg width="9" height="9" viewBox="0 0 9 9">
                        <path d="M1 1l7 7M8 1l-7 7" stroke={SHADOW} strokeWidth="2" />
                      </svg>
                    )}
                  </Cell>
                ))}
              </TableRow>
            ))}
          </Table>
          <ScrollBar>
            <ScrollPart $height={17}>
              <Caret up />
            </ScrollPart>
            <Spring />
            <ScrollPart $height={11} $gap={4} />
            <ScrollPart $height={16}>
              <Caret />
            </ScrollPart>
          </ScrollBar>
        </TableArea>
        <TabStrip $height={19} $pad={2}>
          <Tab $width={67} $active>
            Торговля
          </Tab>
          {terminalTabs.map(([name, width]) => (
            <Tab key={name} $width={width}>
              {name}
            </Tab>
          ))}
        </TabStrip>
      </TerminalFrame>
    </Terminal>
  );
}

function App() {
  return (
    <Desktop>
      <GlobalStyle />
      <TopBars />
      <Workspace>
        <NavigatorPanel />
        <ChartColumn>
          <ChartFrame>
            <MainChart />
          </ChartFrame>
          <TabStrip $height={20} $pad={4}>
            {chartTabs.map(([name, width]) => (
              <Tab key={name} $width={width}>
                {name}
              </Tab>
            ))}
            <Tab $width={80} $active>
              USDCHF,H1
            </Tab>
            <TabArrows>
              <svg width="4" height="7">
                <path d="M4 0v7L0 3.500z" fill={SHADOW} />
              </svg>
              <svg width="4" height="7">
                <path d="M0 0v7L4 3.500z" fill={SHADOW} />
              </svg>
            </TabArrows>
          </TabStrip>
        </ChartColumn>
      </Workspace>
      <TerminalPanel />
      <StatusBar>
        <StatusCell $width={644}>
          <StatusText $spacing={-0.25}>Для справки, нажмите F1</StatusText>
        </StatusCell>
        <StatusCell $width={109}>
          <StatusText $spacing={-0.05} $left={2}>
            Default
          </StatusText>
        </StatusCell>
        <StatusCell $width={101} />
        <StatusCell $width={72} />
        <StatusCell $width={71} />
        <StatusCell $width={69} />
        <StatusCell $width={71} />
        <StatusCell $width={66} />
        <StatusCell $width={160}>
          <svg width="24" height="12" viewBox="0 0 24 12" shapeRendering="crispEdges">
            {Array.from({ length: 8 }, (_, i) => (
              <g key={i}>
                <rect x={i * 3} y="0" width="2" height={9 - i} fill="#5a7900" />
                <rect x={i * 3} y={10 - i} width="2" height={2 + i} fill="#08456b" />
              </g>
            ))}
          </svg>
          <StatusText $spacing={-0.25}>45487/396 kb</StatusText>
        </StatusCell>
      </StatusBar>
      <Taskbar>
        <StartButton>
          <WindowsFlag />
          Пуск
        </StartButton>
        <Grip $left={7} $height={34} />
        <QuickLaunch $left={19}>
          <ServerIcon />
        </QuickLaunch>
        <QuickLaunch $left={20}>
          <PowerShellIcon />
        </QuickLaunch>
        <QuickLaunch $left={18}>
          <FolderIcon />
        </QuickLaunch>
        <QuickLaunch $left={9}>
          <TaskButton $active>
            <ForexLogo size={32} />
          </TaskButton>
          <TaskButton>
            <ForexLogo size={32} />
          </TaskButton>
        </QuickLaunch>
        <Spring />
        <Grip $left={0} $height={34} />
        <TrayText>RU</TrayText>
        <Grip $left={-2} $height={24} />
        <Tray>
          <svg width="7" height="9" viewBox="0 0 7 9">
            <path d="M1 4l2.500-2.500L6 4M1 8l2.500-2.500L6 8" fill="none" stroke="#000" strokeWidth="1.400" />
          </svg>
          <Clock>
            6:36 AM
            <br />
            5/28/2014
          </Clock>
          <MonitorIcon />
        </Tray>
      </Taskbar>
      <OrderDialog />
    </Desktop>
  );
}

export default App;
